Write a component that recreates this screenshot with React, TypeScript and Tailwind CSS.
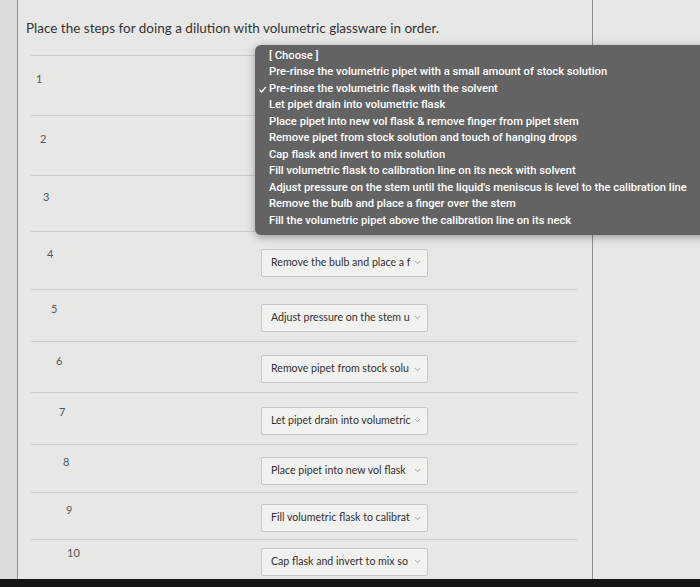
import { ChevronDown } from "lucide-react";

const options = [
  "[ Choose ]",
  "Pre-rinse the volumetric pipet with a small amount of stock solution",
  "Pre-rinse the volumetric flask with the solvent",
  "Let pipet drain into volumetric flask",
  "Place pipet into new vol flask & remove finger from pipet stem",
  "Remove pipet from stock solution and touch of hanging drops",
  "Cap flask and invert to mix solution",
  "Fill volumetric flask to calibration line on its neck with solvent",
  "Adjust pressure on the stem until the liquid's meniscus is level to the calibration line",
  "Remove the bulb and place a finger over the stem",
  "Fill the volumetric pipet above the calibration line on its neck",
];

// row heights / number indent follow the screenshot; `shown` is what fits in the closed select
const rows = [
  { n: 1, h: "h-[60px]", pl: "pl-[5px]", shown: "" },
  { n: 2, h: "h-[60px]", pl: "pl-[9px]", shown: "" },
  { n: 3, h: "h-[56px]", pl: "pl-[12px]", shown: "" },
  { n: 4, h: "h-[58px]", pl: "pl-[16px]", shown: "Remove the bulb and place a f" },
  { n: 5, h: "h-[52px]", pl: "pl-[20px]", shown: "Adjust pressure on the stem u" },
  { n: 6, h: "h-[51px]", pl: "pl-[25px]", shown: "Remove pipet from stock solu" },
  { n: 7, h: "h-[52px]", pl: "pl-[28px]", shown: "Let pipet drain into volumetric" },
  { n: 8, h: "h-[48px]", pl: "pl-[32px]", shown: "Place pipet into new vol flask" },
  { n: 9, h: "h-[47px]", pl: "pl-[35px]", shown: "Fill volumetric flask to calibrat" },
  { n: 10, h: "h-[40px]", pl: "pl-[36px]", shown: "Cap flask and invert to mix so" },
];

function StepSelect({ label }: { label: string }) {
  return (
    <div className="flex h-[28px] w-[167px] items-center rounded-[2px] border border-[#c6c6c4] bg-[#f1f1ef] pl-[9px] pr-[5px]">
      <span className="whitespace-nowrap text-[10.6px] text-[#303030]">{label}</span>
      <ChevronDown className="ml-auto h-[9px] w-[9px] shrink-0 text-[#777]" strokeWidth={1.8} />
    </div>
  );
}

function OpenMenu() {
  return (
    <div className="absolute left-[255px] top-[45px] h-[190px] w-[470px] rounded-l-[6px] bg-[#636363] pt-[3px] shadow-[0_2px_8px_rgba(0,0,0,0.35)] font-['Roboto',sans-serif] text-[11.2px] font-medium text-white">
      {options.map((opt, i) => (
        <div key={opt} className="flex h-[16.5px] items-center whitespace-nowrap">
          <span className="flex w-[14px] justify-center">
            {i === 2 && (
              <svg viewBox="0 0 10 10" className="h-[9px] w-[9px]" fill="none" stroke="white" strokeWidth="1.4">
                <path d="M1.5 5.2 L4 7.8 L8.8 2" />
              </svg>
            )}
          </span>
          <span>{opt}</span>
        </div>
      ))}
    </div>
  );
}

export default function App() {
  return (
    <div className="relative flex h-[587px] w-[700px] flex-col overflow-hidden bg-[#e7e8e6] font-['Lato',sans-serif]">
      <div className="flex flex-1">
        <div className="w-[18px] border-r border-[#8e8e8e] bg-[#dcdddb]" />
        <div className="flex w-[575px] flex-col border-r border-[#8e8e8e]">
          <h1 className="pl-[8px] pt-[18px] text-[13.5px] leading-[20px] text-[#333]">
            Place the steps for doing a dilution with volumetric glassware in order.
          </h1>
          <div className="mt-[17px] ml-[13px] mr-[15px] flex flex-col">
            {rows.map((r) => (
              <div key={r.n} className={`flex ${r.h} items-center border-t border-[#cbcbc9] pt-[4px]`}>
                <div className={`w-[230px] ${r.pl} mb-[16px] text-[11px] text-[#555]`}>{r.n}</div>
                {r.shown && <StepSelect label={r.shown} />}
              </div>
            ))}
          </div>
        </div>
        <div className="flex-1" />
      </div>
      <div className="h-[9px] bg-[#161616]" />
      <OpenMenu />
    </div>
  );
}
